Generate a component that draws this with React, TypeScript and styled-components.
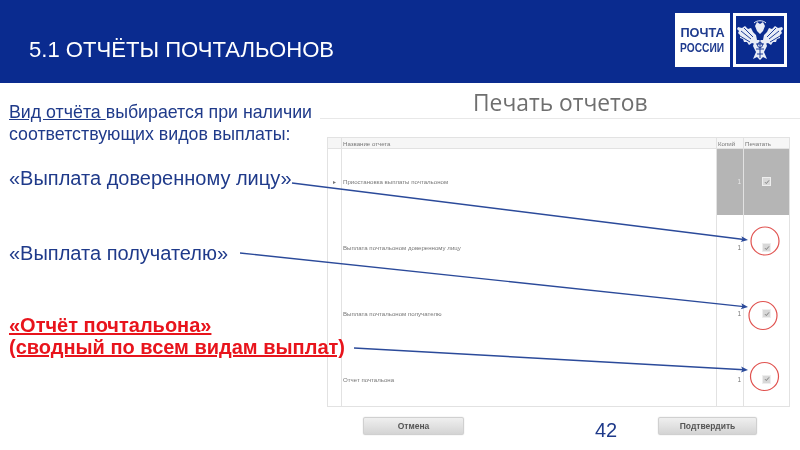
import React from "react";
import styled, { createGlobalStyle } from "styled-components";

const Global = createGlobalStyle`
  html, body { margin: 0; padding: 0; background: #fff; overflow: hidden; }
  body { font-family: "Liberation Sans", Arial, sans-serif; }
`;

const Slide = styled.div`
  position: relative;
  width: 800px;
  height: 450px;
  overflow: hidden;
  background: #fff;
  display: flex;
  flex-direction: column;
  filter: blur(0.4px);
`;

const Header = styled.header`
  height: 83px;
  flex: none;
  background: #0a2b8f;
  display: flex;
  align-items: center;
  justify-content: space-between;
  padding: 0 13px 0 29px;
  box-sizing: border-box;
`;

const Title = styled.h1`
  margin: 17px 0 0;
  font-size: 22.1px;
  font-weight: 400;
  color: #fff;
  line-height: 22px;
  white-space: nowrap;
`;

const Logos = styled.div`
  display: flex;
  gap: 3px;
  margin-top: -3px;
  filter: blur(0.3px);
`;

const Wordmark = styled.div`
  width: 55px;
  height: 54px;
  background: #fff;
  display: flex;
  flex-direction: column;
  align-items: center;
  justify-content: center;
  color: #1f3b8e;
  font-weight: 700;
  font-size: 13px;
  line-height: 15px;
`;

const WordLine = styled.span<{ $sx: number }>`
  display: block;
  white-space: nowrap;
  transform: scaleX(${(p) => p.$sx});
`;

const Emblem = styled.div`
  width: 54px;
  height: 54px;
  box-sizing: border-box;
  border: 3px solid #fff;
  background: #0a2b8f;
`;

const Main = styled.main`
  flex: 1;
  display: flex;
  min-height: 0;
`;

const Notes = styled.section`
  width: 320px;
  flex: none;
  box-sizing: border-box;
  padding: 18px 0 0 9px;
  white-space: nowrap;
  position: relative;
  z-index: 1;
`;

const Note = styled.p<{ $top?: number; $red?: boolean }>`
  margin: ${(p) => p.$top ?? 0}px 0 0;
  font-size: 17.8px;
  line-height: 22px;
  color: ${(p) => (p.$red ? "#e8141c" : "#1f3a8a")};
  font-weight: ${(p) => (p.$red ? 700 : 400)};
  text-decoration: ${(p) => (p.$red ? "underline" : "none")};
`;

const NoteLarge = styled(Note)`
  font-size: 20px;
`;

const Under = styled.span`
  text-decoration: underline;
`;

const Panel = styled.section`
  flex: 1;
  min-width: 0;
  display: flex;
  flex-direction: column;
  filter: blur(0.35px);
`;

const PanelTitle = styled.h2`
  margin: 0;
  height: 36px;
  box-sizing: border-box;
  border-bottom: 1px solid #e8e8e8;
  padding-left: 153px;
  font-family: "Open Sans", sans-serif;
  font-size: 22.8px;
  font-weight: 400;
  line-height: 40px;
  color: #6f6f6f;
  white-space: nowrap;
`;

const ReportTable = styled.table`
  margin: 18px 0 0 7px;
  width: 463px;
  border-collapse: collapse;
  table-layout: fixed;
  font-size: 6.1px;
  color: #777;
`;

const Th = styled.th<{ $w?: number }>`
  width: ${(p) => (p.$w ? `${p.$w}px` : "auto")};
  height: 11px;
  box-sizing: border-box;
  padding: 0 0 0 1px;
  background: #f6f6f6;
  border: 1px solid #e2e2e2;
  font-weight: 400;
  text-align: left;
`;

const Td = styled.td<{ $shade?: boolean; $num?: boolean; $center?: boolean }>`
  height: 66px;
  box-sizing: border-box;
  padding: ${(p) => (p.$center ? "0" : "0 2px 0 1px")};
  border: 1px solid #e2e2e2;
  border-top: 0;
  border-bottom: 0;
  background: ${(p) => (p.$shade ? "#b5b5b5" : "#fff")};
  text-align: ${(p) => (p.$num ? "right" : p.$center ? "center" : "left")};
  color: ${(p) => (p.$shade ? "#e8e8e8" : "#777")};
  font-size: ${(p) => (p.$num ? "6.5px" : "6.1px")};
  vertical-align: middle;
`;

const Tr = styled.tr`
  &:last-child td {
    height: 60px;
    padding-top: 6px;
    border-bottom: 1px solid #e2e2e2;
  }
`;

const Check = styled.span`
  display: inline-flex;
  width: 7px;
  height: 7px;
  background: #d8d8d8;
  border: 0.5px solid #eee;
  align-items: center;
  justify-content: center;
  vertical-align: middle;
`;

const Actions = styled.div`
  display: flex;
  align-items: flex-start;
  padding: 10px 0 0 43px;
`;

const ActionButton = styled.button<{ $w: number }>`
  width: ${(p) => p.$w}px;
  height: 18px;
  padding: 0;
  border: 1px solid #d0d0d0;
  border-radius: 2px;
  background: linear-gradient(#efefef, #d4d4d4);
  box-shadow: 0 0 1px #bbb;
  font-family: "Liberation Sans", sans-serif;
  font-size: 8.5px;
  font-weight: 700;
  color: #555;
`;

const PageNumber = styled.div`
  width: 194px;
  box-sizing: border-box;
  padding: 1px 0 0 131px;
  font-size: 20px;
  line-height: 24px;
  color: #1f3a8a;
`;

const Overlay = styled.svg`
  position: absolute;
  inset: 0;
  z-index: 2;
  pointer-events: none;
`;

const rows = [
  { name: "Приостановка выплаты почтальоном", shade: true, marker: true },
  { name: "Выплата почтальоном доверенному лицу" },
  { name: "Выплата почтальоном получателю" },
  { name: "Отчет почтальона" },
];

const arrows = [
  { x1: 292, y1: 183, x2: 748, y2: 240 },
  { x1: 240, y1: 253, x2: 748, y2: 307 },
  { x1: 354, y1: 348, x2: 748, y2: 370 },
];

const circles = [
  { cx: 765, cy: 241 },
  { cx: 763, cy: 315.5 },
  { cx: 764.5, cy: 376.5 },
];

const Eagle = () => (
  <svg width="48" height="48" viewBox="0 0 48 48" aria-hidden="true">
    <g fill="#e9edf6">
      <path d="M2 11l4 1 3-2 3 3 3-1 2 4 3 3 1 5-2 4-3-1-3 2-2-3-3 0-1-3-3-1 0-3-2-2 1-2-2-2z" />
      <path d="M46 11l-4 1-3-2-3 3-3-1-2 4-3 3-1 5 2 4 3-1 3 2 2-3 3 0 1-3 3-1 0-3 2-2-1-2 2-2z" />
      <path d="M19 24h10l2 6-3 6 3 7-4-2-3 3-3-3-4 2 3-7-3-6z" />
      <path d="M19 10l2-4 3 2 3-2 2 4-2 5-3 3-3-3z" />
    </g>
    <g stroke="#0a2b8f" strokeWidth="0.9" fill="none">
      <path d="M5 15l10 8M8 12l9 9M4 20l10 6M40 12l-9 9M43 15l-10 8M44 20l-10 6" />
      <path d="M20 28h8M20 33h8M21 38h6M24 24v18" />
      <circle cx="24" cy="29" r="2.5" />
    </g>
    <path d="M18 7c3-3 9-3 12 0" stroke="#e9edf6" strokeWidth="1" fill="none" />
  </svg>
);

export default function App() {
  return (
    <>
      <Global />
      <Slide>
        <Header>
          <Title>5.1 ОТЧЁТЫ ПОЧТАЛЬОНОВ</Title>
          <Logos>
            <Wordmark>
              <WordLine $sx={0.98}>ПОЧТА</WordLine>
              <WordLine $sx={0.785}>РОССИИ</WordLine>
            </Wordmark>
            <Emblem>
              <Eagle />
            </Emblem>
          </Logos>
        </Header>
        <Main>
          <Notes>
            <Note>
              <Under>Вид отчёта </Under>выбирается при наличии
            </Note>
            <Note>соответствующих видов выплаты:</Note>
            <NoteLarge $top={22}>«Выплата доверенному лицу»</NoteLarge>
            <NoteLarge $top={53}>«Выплата получателю»</NoteLarge>
            <NoteLarge $top={50} $red>«Отчёт почтальона»</NoteLarge>
            <NoteLarge $red>(сводный по всем видам выплат)</NoteLarge>
          </Notes>
          <Panel>
            <PanelTitle>Печать отчетов</PanelTitle>
            <ReportTable>
              <thead>
                <tr>
                  <Th $w={14} />
                  <Th>Название отчета</Th>
                  <Th $w={27}>Копий</Th>
                  <Th $w={46}>Печатать</Th>
                </tr>
              </thead>
              <tbody>
                {rows.map((r) => (
                  <Tr key={r.name}>
                    <Td $center>{r.marker ? "▸" : ""}</Td>
                    <Td>{r.name}</Td>
                    <Td $shade={r.shade} $num>1</Td>
                    <Td $shade={r.shade} $center>
                      <Check>
                        <svg width="6" height="6" viewBox="0 0 6 6" aria-hidden="true">
                          <path d="M1 3.2l1.3 1.3L5 1.4" stroke="#666" strokeWidth="0.8" fill="none" />
                        </svg>
                      </Check>
                    </Td>
                  </Tr>
                ))}
              </tbody>
            </ReportTable>
            <Actions>
              <ActionButton $w={101}>Отмена</ActionButton>
              <PageNumber>42</PageNumber>
              <ActionButton $w={99}>Подтвердить</ActionButton>
            </Actions>
          </Panel>
        </Main>
        <Overlay width="800" height="450" viewBox="0 0 800 450" aria-hidden="true">
          {arrows.map((a) => {
            const ang = Math.atan2(a.y2 - a.y1, a.x2 - a.x1);
            const deg = (ang * 180) / Math.PI;
            return (
              <g key={a.x1}>
                <line x1={a.x1} y1={a.y1} x2={a.x2 - 4} y2={a.y2 - 4 * Math.tan(ang)} stroke="#2b4a9a" strokeWidth="1.4" />
                <path d="M0 0l-7-3 1.5 3-1.5 3z" fill="#2b4a9a" transform={`translate(${a.x2} ${a.y2}) rotate(${deg})`} />
              </g>
            );
          })}
          {circles.map((c) => (
            <circle key={c.cx} cx={c.cx} cy={c.cy} r="14" fill="none" stroke="#e0524f" strokeWidth="1.2" />
          ))}
        </Overlay>
      </Slide>
    </>
  );
}
